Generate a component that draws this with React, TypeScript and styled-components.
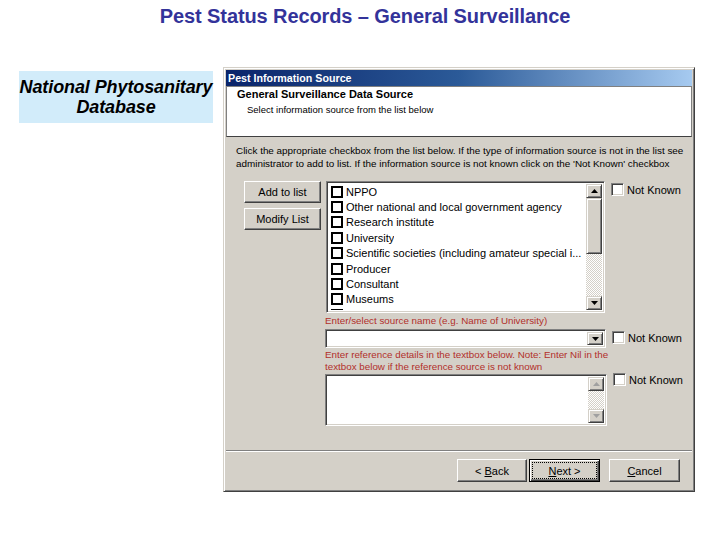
import React, { ReactElement } from 'react';
import styled, { createGlobalStyle } from 'styled-components';

const GlobalStyle = createGlobalStyle`
  html, body {
    margin: 0;
    padding: 0;
    background: #fff;
  }
  body {
    font-family: 'Liberation Sans', Arial, sans-serif;
  }
`;

const sources = [
  'NPPO',
  'Other national and local government agency',
  'Research institute',
  'University',
  'Scientific societies (including amateur special i...',
  'Producer',
  'Consultant',
  'Museums',
  '',
];

const Arrow = ({ down, disabled }: { down?: boolean; disabled?: boolean }): ReactElement => (
  <svg width="7" height="4" viewBox="0 0 7 4">
    <polygon
      points={down ? '0,0 7,0 3.5,4' : '0,4 7,4 3.5,0'}
      fill={disabled ? '#a0a0a0' : '#000'}
    />
  </svg>
);

export default function App(): ReactElement {
  return (
    <Page>
      <GlobalStyle />
      <Heading>Pest Status Records – General Surveillance</Heading>
      <Main>
        <Banner>
          National Phytosanitary
          <br />
          Database
        </Banner>
        <Window>
          <TitleBar>Pest Information Source</TitleBar>
          <Header>
            <HeaderTitle>General Surveillance Data Source</HeaderTitle>
            <HeaderSub>Select information source from the list below</HeaderSub>
          </Header>
          <Body>
            <Instructions>
              Click the appropriate checkbox from the list below. If the type of information source is not in the list see
              <br />
              administrator to add to list. If the information source is not known click on the 'Not Known' checkbox
            </Instructions>
            <Form>
              <SourceRow>
                <ButtonColumn>
                  <Button width={77}>Add to list</Button>
                  <Button width={77}>Modify List</Button>
                </ButtonColumn>
                <ListBox>
                  <ListItems>
                    {sources.map((s, i) => (
                      <ListItem key={i}>
                        <ItemBox />
                        {s && <ItemText>{s}</ItemText>}
                      </ListItem>
                    ))}
                  </ListItems>
                  <ScrollBar>
                    <ScrollButton>
                      <Arrow />
                    </ScrollButton>
                    <Thumb />
                    <Track />
                    <ScrollButton>
                      <Arrow down />
                    </ScrollButton>
                  </ScrollBar>
                </ListBox>
                <NotKnown offset={2}>
                  <Check />
                  Not Known
                </NotKnown>
              </SourceRow>
              <Fields>
                <RedText>Enter/select source name (e.g. Name of University)</RedText>
                <FieldRow>
                  <Combo>
                    <ComboButton>
                      <Arrow down />
                    </ComboButton>
                  </Combo>
                  <NotKnown offset={0} center>
                    <Check />
                    Not Known
                  </NotKnown>
                </FieldRow>
                <RedNote>
                  Enter reference details in the textbox below. Note: Enter Nil in the
                  <br />
                  textbox below if the reference source is not known
                </RedNote>
                <FieldRow>
                  <TextArea>
                    <ScrollBar>
                      <ScrollButton>
                        <Arrow disabled />
                      </ScrollButton>
                      <Track />
                      <ScrollButton>
                        <Arrow down disabled />
                      </ScrollButton>
                    </ScrollBar>
                  </TextArea>
                  <NotKnown offset={0}>
                    <Check />
                    Not Known
                  </NotKnown>
                </FieldRow>
              </Fields>
            </Form>
          </Body>
          <Footer>
            <Button width={70} tall>
              {'<\u00a0'}
              <u>B</u>ack
            </Button>
            <DefaultButton>
              <Focus>
                <u>N</u>
                {'ext\u00a0>'}
              </Focus>
            </DefaultButton>
            <Button width={71} gap={9} tall>
              <u>C</u>ancel
            </Button>
          </Footer>
        </Window>
      </Main>
    </Page>
  );
}

const Page = styled.div`
  width: 720px;
  height: 540px;
  overflow: hidden;
`;

const Heading = styled.h1`
  margin: 0;
  padding: 5px 0 0 10px;
  text-align: center;
  font-family: 'Liberation Sans', Arial, sans-serif;
  font-size: 20px;
  line-height: 22px;
  font-weight: bold;
  color: #33339a;
  letter-spacing: -0.1px;
`;

const Main = styled.div`
  display: flex;
  align-items: flex-start;
  gap: 10px;
  margin-top: 40px;
  padding-left: 19px;
`;

const Banner = styled.div`
  width: 194px;
  height: 52px;
  margin-top: 4px;
  background: #d2ecfa;
  text-align: center;
  font-family: 'Liberation Sans', Arial, sans-serif;
  font-size: 18px;
  line-height: 20px;
  padding-top: 6px;
  box-sizing: border-box;
  font-weight: bold;
  font-style: italic;
  color: #000;
  white-space: nowrap;
  letter-spacing: -0.1px;
`;

const Window = styled.div`
  width: 472px;
  height: 425px;
  box-sizing: border-box;
  display: flex;
  flex-direction: column;
  background: #d4d0c8;
  border: 1px solid;
  border-color: #d4d0c8 #404040 #404040 #d4d0c8;
  box-shadow: inset 1px 1px #fff, inset -1px -1px #808080;
  padding: 2px;
  font-family: 'Liberation Sans', Arial, sans-serif;
  font-size: 9.9px;
  color: #000;
`;

const TitleBar = styled.div`
  height: 16px;
  flex-shrink: 0;
  background: linear-gradient(to right, #0a246a 0%, #2b5a98 50%, #a6caf0 100%);
  color: #fff;
  font-weight: bold;
  font-size: 10.7px;
  line-height: 16px;
  padding-left: 2px;
`;

const Header = styled.div`
  height: 51px;
  flex-shrink: 0;
  box-sizing: border-box;
  background: #fff;
  border: 1px solid;
  border-color: #808080 #808080 #404040 #808080;
  padding: 1px 0 0 10px;
`;

const HeaderTitle = styled.div`
  font-weight: bold;
  font-size: 11px;
  line-height: 13px;
`;

const HeaderSub = styled.div`
  padding-left: 10px;
  margin-top: 2px;
  font-size: 9.5px;
  line-height: 13px;
`;

const Body = styled.div`
  flex: 1;
  padding: 7px 0 0 10px;
`;

const Instructions = styled.div`
  line-height: 13px;
  white-space: nowrap;
`;

const Form = styled.div`
  margin-top: 11px;
  padding-left: 8px;
`;

const SourceRow = styled.div`
  display: flex;
  align-items: flex-start;
`;

const ButtonColumn = styled.div`
  display: flex;
  flex-direction: column;
  gap: 5px;
  margin-right: 5px;
`;

const Button = styled.div<{ width: number; gap?: number; tall?: boolean }>`
  width: ${p => p.width}px;
  height: ${p => (p.tall ? 23 : 22)}px;
  box-sizing: border-box;
  margin-left: ${p => p.gap || 0}px;
  display: flex;
  align-items: center;
  justify-content: center;
  background: #d4d0c8;
  border: 1px solid;
  border-color: #fff #404040 #404040 #fff;
  box-shadow: inset -1px -1px #808080;
  font-size: 11px;
  color: #000;
  white-space: nowrap;

  u {
    text-decoration: underline;
  }
`;

const DefaultButton = styled.div`
  width: 71px;
  height: 23px;
  box-sizing: border-box;
  margin-left: 2px;
  padding: 2px;
  background: #d4d0c8;
  border: 1px solid #000;
  box-shadow: inset 1px 1px #fff, inset -1px -1px #404040, inset -2px -2px #808080;
  font-size: 11px;
`;

const Focus = styled.div`
  height: 100%;
  box-sizing: border-box;
  border: 1px dotted #000;
  display: flex;
  align-items: center;
  justify-content: center;
  white-space: nowrap;
`;

const sunken = `
  border: 1px solid;
  border-color: #808080 #fff #fff #808080;
  box-shadow: inset 1px 1px #404040, inset -1px -1px #d4d0c8;
  background: #fff;
  box-sizing: border-box;
`;

const ListBox = styled.div`
  ${sunken}
  width: 279px;
  height: 132px;
  display: flex;
  padding: 2px;
  overflow: hidden;
`;

const ListItems = styled.div`
  flex: 1;
  min-width: 0;
  padding-left: 2px;
  overflow: hidden;
`;

const ListItem = styled.div`
  height: 15.4px;
  display: flex;
  align-items: center;
  gap: 3px;
  font-size: 11px;
  white-space: nowrap;
`;

const ItemBox = styled.span`
  width: 12px;
  height: 12px;
  box-sizing: border-box;
  border: 2px solid #000;
  background: #fff;
  flex-shrink: 0;
`;

const ItemText = styled.span`
  overflow: hidden;
`;

const ScrollBar = styled.div`
  width: 16px;
  flex-shrink: 0;
  display: flex;
  flex-direction: column;
`;

const raised = `
  background: #d4d0c8;
  border: 1px solid;
  border-color: #d4d0c8 #404040 #404040 #d4d0c8;
  box-shadow: inset 1px 1px #fff, inset -1px -1px #808080;
  box-sizing: border-box;
`;

const ScrollButton = styled.div`
  ${raised}
  height: 14px;
  flex-shrink: 0;
  display: flex;
  align-items: center;
  justify-content: center;
`;

const Thumb = styled.div`
  ${raised}
  height: 56px;
  flex-shrink: 0;
`;

const Track = styled.div`
  flex: 1;
  background: repeating-conic-gradient(#fff 0 25%, #d4d0c8 0 50%) 0 0 / 2px 2px;
`;

const NotKnown = styled.div<{ offset: number; center?: boolean }>`
  display: flex;
  align-items: center;
  gap: 3px;
  margin-left: 6px;
  margin-top: ${p => p.offset}px;
  align-self: ${p => (p.center ? 'center' : 'flex-start')};
  font-size: 11px;
  white-space: nowrap;
`;

const Check = styled.span`
  ${sunken}
  width: 13px;
  height: 13px;
  flex-shrink: 0;
`;

const Fields = styled.div`
  margin-left: 81px;
`;

const RedText = styled.div`
  margin-top: 2px;
  line-height: 12px;
  font-size: 9.8px;
  color: #b22f2a;
  white-space: nowrap;
`;

const RedNote = styled(RedText)`
  margin-top: 1px;
`;

const FieldRow = styled.div`
  display: flex;
  align-items: flex-start;
`;

const Combo = styled.div`
  ${sunken}
  width: 281px;
  height: 19px;
  margin-top: 2px;
  display: flex;
  justify-content: flex-end;
  padding: 2px;
`;

const ComboButton = styled.div`
  ${raised}
  width: 16px;
  display: flex;
  align-items: center;
  justify-content: center;
`;

const TextArea = styled.div`
  ${sunken}
  width: 282px;
  height: 52px;
  margin-top: 1px;
  display: flex;
  justify-content: flex-end;
  padding: 2px;
`;

const Footer = styled.div`
  flex-shrink: 0;
  display: flex;
  justify-content: flex-end;
  border-top: 1px solid #808080;
  box-shadow: inset 0 1px #fff;
  padding: 8px 12px 7px 0;
`;
